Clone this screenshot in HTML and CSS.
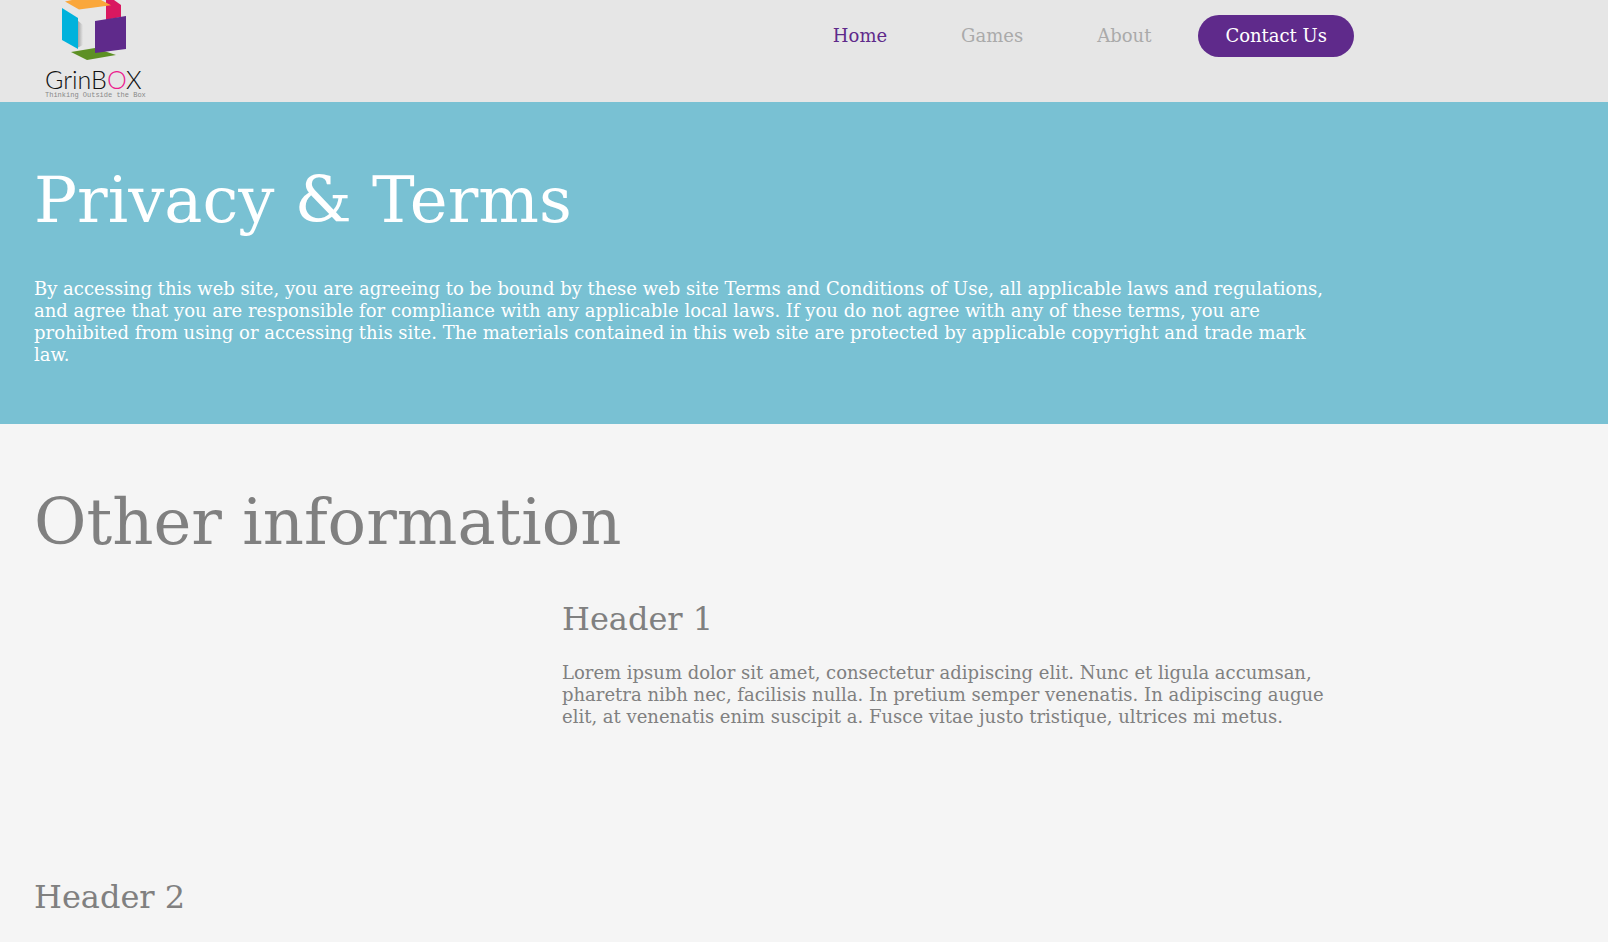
FILE: index.html
```html
<!DOCTYPE html>
<html lang="en">
<head>
<meta charset="utf-8">
<title>GrinBOX - Privacy &amp; Terms</title>
<link rel="stylesheet" href="styles.css">
</head>
<body>
<header class="site-header">
  <div class="container header-row">
    <a class="logo" href="#" aria-label="GrinBOX home">
      <svg width="120" height="102" viewBox="34 0 120 102">
        <defs>
          <linearGradient id="shade" x1="0" x2="1" y1="0" y2="0">
            <stop offset="0" stop-color="#999"/>
            <stop offset="1" stop-color="#e6e6e6"/>
          </linearGradient>
        </defs>
        <path fill="url(#shade)" d="M77 20l6 5v20l-6 3z"/>
        <path fill="#d91860" d="M106 0h8l7 5v12l-15 3z"/>
        <path fill="#faa73b" d="M65 1.500l7-1.500h29l10 5.300L79 9.500z"/>
        <path fill="#00b2dc" d="M62 8l16 10v31L62 40z"/>
        <path fill="#5d9024" d="M71 52l24-4 21 7-29 5z"/>
        <path fill="#5f2a8b" d="M95 21l31-5v33l-31 4z"/>
        <text class="logo-name" x="45" y="89">GrinB<tspan class="logo-o">O</tspan>X</text>
        <text class="logo-tag" x="45" y="97">Thinking Outside the Box</text>
      </svg>
    </a>
    <nav class="nav">
      <a class="nav-link active" href="#">Home</a>
      <a class="nav-link" href="#">Games</a>
      <a class="nav-link" href="#">About</a>
      <a class="nav-link contact" href="#">Contact Us</a>
    </nav>
  </div>
</header>
<main>
  <section class="band intro">
    <div class="container">
      <h1 class="title">Privacy &amp; Terms</h1>
      <p class="text">By accessing this web site, you are agreeing to be bound by these web site Terms and Conditions of Use, all applicable laws and regulations, and agree that you are responsible for compliance with any applicable local laws. If you do not agree with any of these terms, you are prohibited from using or accessing this site. The materials contained in this web site are protected by applicable copyright and trade mark law.</p>
    </div>
  </section>
  <section class="band">
    <div class="container">
      <h2 class="title">Other information</h2>
      <div class="row">
        <article class="entry end">
          <h3 class="subtitle">Header 1</h3>
          <p class="text">Lorem ipsum dolor sit amet, consectetur adipiscing elit. Nunc et ligula accumsan, pharetra nibh nec, facilisis nulla. In pretium semper venenatis. In adipiscing augue elit, at venenatis enim suscipit a. Fusce vitae justo tristique, ultrices mi metus.</p>
        </article>
      </div>
      <div class="row">
        <article class="entry">
          <h3 class="subtitle">Header 2</h3>
        </article>
      </div>
    </div>
  </section>
</main>
</body>
</html>
```
FILE: styles.css
```css
* { box-sizing: border-box; }

body {
  margin: 0;
  background: #f5f5f5;
  color: #808080;
  font: 18px/22px "DejaVu Serif", serif;
}

.container {
  max-width: 1320px;
  margin-left: 34px;
}

.site-header { background: #e6e6e6; }

.header-row {
  display: flex;
  justify-content: space-between;
  align-items: flex-start;
}

.logo svg { display: block; }

.logo-name {
  font: 300 25px "Lato", sans-serif;
  fill: #111;
}

.logo-o { fill: #ec1e8f; }

.logo-tag {
  font: 7px "Liberation Mono", monospace;
  fill: #888;
}

.nav {
  display: flex;
  gap: 20px;
  padding-top: 15px;
}

.nav-link {
  padding: 10px 27px;
  border-radius: 21px;
  color: #aaa;
  text-decoration: none;
}

.nav-link.active { color: #5f2a8b; }

.nav-link.contact {
  background: #5f2a8b;
  color: #fff;
}

.band { padding: 60px 0 58px; }

.intro {
  background: #79c1d3;
  color: #fff;
}

.title {
  margin: 0 0 40px;
  font-size: 64px;
  line-height: 76px;
  font-weight: 400;
}

.text {
  max-width: 1300px;
  margin: 0;
}

.row {
  display: grid;
  grid-template-columns: repeat(5, 1fr);
  min-height: 278px;
}

.entry { grid-column: 1 / span 3; }

.entry.end { grid-column: 3 / span 3; }

.subtitle {
  margin: 0 0 24px;
  font-size: 32px;
  line-height: 38px;
  font-weight: 400;
}
```
